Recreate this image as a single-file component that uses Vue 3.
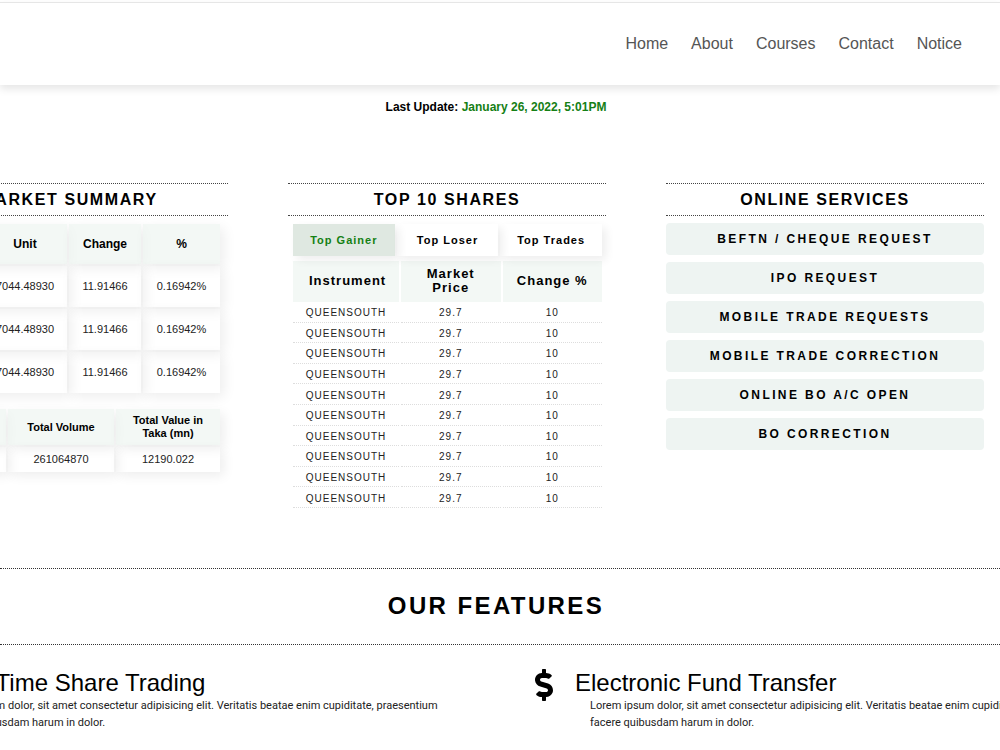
<script setup>
import { ref } from 'vue'

const links = ['Home', 'About', 'Courses', 'Contact', 'Notice']
const tabs = ['Top Gainer', 'Top Loser', 'Top Trades']
const active = ref('Top Gainer')
const services = [
  'BEFTN / Cheque Request',
  'IPO Request',
  'Mobile Trade Requests',
  'Mobile Trade Correction',
  'Online BO A/C Open',
  'BO Correction',
]
const lorem =
  'Lorem ipsum dolor, sit amet consectetur adipisicing elit. Veritatis beatae enim cupiditate, praesentium facere quibusdam harum in dolor.'
</script>

<template>
  <div class="page">
    <header class="header">
      <nav class="nav">
        <a v-for="l in links" :key="l" href="#">{{ l }}</a>
      </nav>
    </header>

    <p class="update">Last Update: <span>January 26, 2022, 5:01PM</span></p>

    <main>
      <div class="panels">
        <section>
          <h2 class="title">Market Summary</h2>
          <table class="cards summary">
            <thead>
              <tr><th class="unit">Unit</th><th class="change">Change</th><th>%</th></tr>
            </thead>
            <tbody>
              <tr v-for="n in 3" :key="n"><td>7044.48930</td><td>11.91466</td><td>0.16942%</td></tr>
            </tbody>
          </table>
          <table class="cards totals">
            <thead>
              <tr><th class="lead"></th><th class="volume">Total Volume</th><th class="value">Total Value in Taka (mn)</th></tr>
            </thead>
            <tbody>
              <tr><td></td><td>261064870</td><td>12190.022</td></tr>
            </tbody>
          </table>
        </section>

        <section>
          <h2 class="title">Top 10 Shares</h2>
          <div class="tabs">
            <button
              v-for="t in tabs"
              :key="t"
              type="button"
              :class="{ active: t === active }"
              @click="active = t"
            >{{ t }}</button>
          </div>
          <table class="shares">
            <thead>
              <tr><th class="instrument">Instrument</th><th>Market Price</th><th>Change %</th></tr>
            </thead>
            <tbody>
              <tr v-for="n in 10" :key="n"><td>QUEENSOUTH</td><td>29.7</td><td>10</td></tr>
            </tbody>
          </table>
        </section>

        <section>
          <h2 class="title">Online Services</h2>
          <div class="services">
            <button v-for="s in services" :key="s" type="button">{{ s }}</button>
          </div>
        </section>
      </div>

      <h2 class="features-title">Our Features</h2>
      <div class="features">
        <article>
          <div class="feature-head">
            <svg class="chart" viewBox="0 0 33 32" aria-hidden="true">
              <path d="M2 3v26h30M8 22l7-8 5 5 9-11" fill="none" stroke="currentColor" stroke-width="4" />
            </svg>
            <h3>Real Time Share Trading</h3>
          </div>
          <p>{{ lorem }}</p>
        </article>
        <article>
          <div class="feature-head">
            <svg class="dollar" viewBox="0 0 288 512" aria-hidden="true">
              <path fill="currentColor" d="M209.2 233.4l-108-31.6C88.7 198.2 80 186.5 80 173.5c0-16.3 13.2-29.5 29.5-29.5h66.3c12.2 0 24.2 3.7 34.2 10.5 6.1 4.1 14.3 3.1 19.5-2l34.8-34c7.1-6.9 6.1-18.4-1.8-24.5C238 74.8 207.4 64.1 176 64V16c0-8.8-7.2-16-16-16h-32c-8.8 0-16 7.2-16 16v48h-2.5C45.8 64-5.4 118.7.5 183.6c4.2 46.1 39.4 83.6 83.8 96.6l102.5 30c12.5 3.7 21.2 15.3 21.2 28.3 0 16.3-13.2 29.5-29.5 29.5h-66.3C100 368 88 364.3 78 357.5c-6.1-4.1-14.3-3.1-19.5 2l-34.8 34c-7.1 6.9-6.1 18.4 1.8 24.5 24.5 19.2 55.1 29.9 86.5 30v48c0 8.8 7.2 16 16 16h32c8.8 0 16-7.2 16-16v-48.2c46.6-.9 90.3-28.6 105.7-72.7 21.5-61.6-14.6-124.8-72.5-141.7z" />
            </svg>
            <h3>Electronic Fund Transfer</h3>
          </div>
          <p>{{ lorem }}</p>
        </article>
      </div>
    </main>
  </div>
</template>

<style>
body {
  background: #fff;
}
</style>

<style scoped>
.page {
  min-height: 100vh;
  padding-top: 2px;
  overflow: hidden;
  box-sizing: border-box;
  background: #fff;
  color: #000;
  font-family: "Liberation Sans", Arial, sans-serif;
}
h2, h3, p {
  margin: 0;
}
button {
  border: 0;
  font-family: inherit;
  font-weight: 700;
  color: #000;
  cursor: pointer;
}
.header {
  display: flex;
  justify-content: flex-end;
  padding: 32px 38px 32px 37px;
  border-top: 1px solid #e6e6e6;
  box-shadow: 0 4px 8px rgba(0, 0, 0, 0.1);
}
.nav {
  display: flex;
  gap: 23px;
}
.nav a {
  color: #555;
  font-size: 16px;
  line-height: 18px;
  text-decoration: none;
}
.update {
  margin-top: 14px;
  text-align: center;
  font-size: 12px;
  line-height: 16px;
  font-weight: 700;
  padding-right: 8px;
}
.update span {
  color: #158015;
}
.panels {
  display: grid;
  grid-template-columns: repeat(3, minmax(0, 1fr));
  gap: 60px;
  margin: 68px 16px 0 -90px;
}
.title {
  border-top: 1px dotted #444;
  border-bottom: 1px dotted #444;
  font-size: 16px;
  line-height: 31px;
  letter-spacing: 0.1em;
  text-align: center;
  text-transform: uppercase;
}
table {
  table-layout: fixed;
}
.cards {
  border-spacing: 2px;
  text-align: center;
  font-size: 11px;
  line-height: 13px;
}
.cards th,
.cards td {
  padding: 0;
  box-shadow: 4px 4px 12px rgba(0, 0, 0, 0.07);
}
.cards td {
  color: #222;
}
.cards th {
  background: rgba(238, 245, 241, 0.7);
}
.summary {
  width: calc(100% - 77px);
  margin: 6px 0 0 71px;
}
.summary th {
  height: 40px;
  font-size: 12px;
}
.summary td {
  height: 41px;
}
.unit {
  width: 84px;
}
.change {
  width: 72px;
}
.totals {
  width: calc(100% - 11px);
  margin: 12px 0 0 5px;
}
.totals th {
  height: 36px;
}
.totals .value {
  padding: 0 12px;
}
.totals td {
  height: 25px;
}
.lead {
  width: 89px;
}
.volume {
  width: 106px;
}
.tabs {
  display: grid;
  grid-template-columns: repeat(3, 1fr);
  gap: 2px;
  margin: 8px 4px 0 5px;
}
.tabs button {
  padding: 0;
  background: transparent;
  font-size: 11px;
  line-height: 32px;
  letter-spacing: 1px;
  box-shadow: 4px 4px 10px rgba(0, 0, 0, 0.07);
}
.tabs .active {
  background: #dfe8e1;
  color: #158015;
}
.shares {
  width: calc(100% - 5px);
  height: 247px;
  margin: 5px 2px 0 3px;
  border-spacing: 2px 0;
  text-align: center;
  letter-spacing: 1px;
}
.shares th {
  height: 39px;
  padding: 0 16px 2px;
  background: rgba(238, 245, 241, 0.7);
  font-size: 13px;
  line-height: 14px;
}
.shares th:last-child {
  padding: 0 0 2px;
}
.instrument {
  width: 74px;
}
.shares td {
  padding: 2px 0 0;
  border-bottom: 1px dotted #ddd;
  color: #222;
  font-size: 10px;
  line-height: 17px;
}
.services {
  display: grid;
  gap: 7px;
  margin-top: 7px;
}
.services button {
  padding: 0;
  border-radius: 4px;
  background: #eef4f2;
  font-size: 12px;
  line-height: 32px;
  letter-spacing: 0.2em;
  text-transform: uppercase;
}
.features-title {
  margin-top: 60px;
  border-top: 1px dotted #333;
  border-bottom: 1px dotted #333;
  padding: 0 8px 1px 0;
  font-size: 24px;
  line-height: 74px;
  letter-spacing: 0.1em;
  text-align: center;
  text-transform: uppercase;
}
.features {
  display: grid;
  grid-template-columns: 1fr 1fr;
  margin: 24px -184px 0 -114px;
}
.feature-head {
  display: flex;
  gap: 22px;
  height: 28px;
}
.feature-head svg {
  height: 32px;
}
.chart {
  width: 32px;
}
.dollar {
  width: 18px;
}
.features h3 {
  font-size: 24px;
  line-height: 28px;
  font-weight: 400;
}
.features p {
  padding: 0 80px 0 55px;
  color: #222;
  font-family: Roboto, sans-serif;
  font-size: 11px;
  line-height: 17px;
}
</style>
